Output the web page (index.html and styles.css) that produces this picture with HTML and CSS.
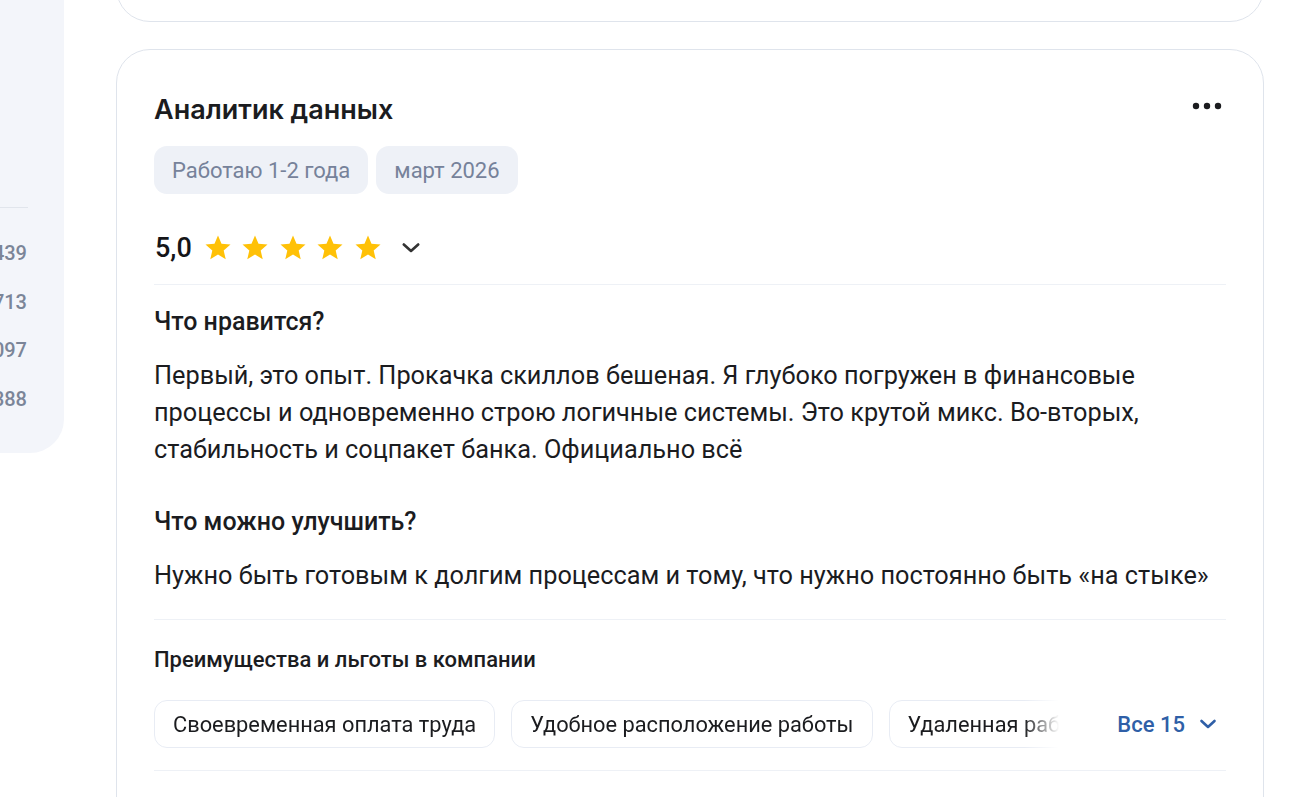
FILE: index.html
```html
<!DOCTYPE html>
<html lang="ru">
<head>
<meta charset="utf-8">
<title>Отзыв</title>
<link rel="stylesheet" href="styles.css">
</head>
<body>
<div class="page">
  <aside class="sidebar">
    <div class="side-divider"></div>
    <ul class="side-stats">
      <li>2 439</li>
      <li>1 713</li>
      <li>1 097</li>
      <li>2 388</li>
    </ul>
  </aside>
  <main class="feed">
    <div class="card card-prev"></div>
    <article class="card review">
      <header class="review-head">
        <h2 class="review-title">Аналитик данных</h2>
        <button class="more" aria-label="Ещё">
          <svg width="32" height="8" viewBox="0 0 32 8"><circle cx="4" cy="4" r="3.2"/><circle cx="15" cy="4" r="3.2"/><circle cx="26" cy="4" r="3.2"/></svg>
        </button>
      </header>
      <div class="tags">
        <span class="tag">Работаю 1-2 года</span>
        <span class="tag">март 2026</span>
      </div>
      <div class="rating">
        <span class="rating-value">5,0</span>
        <span class="stars">
          <svg class="star" viewBox="0 0 24 24"><path d="M12 17.27L18.18 21l-1.64-7.03L22 9.24l-7.19-.61L12 2 9.19 8.63 2 9.24l5.46 4.73L5.82 21z"/></svg>
          <svg class="star" viewBox="0 0 24 24"><path d="M12 17.27L18.18 21l-1.64-7.03L22 9.24l-7.19-.61L12 2 9.19 8.63 2 9.24l5.46 4.73L5.82 21z"/></svg>
          <svg class="star" viewBox="0 0 24 24"><path d="M12 17.27L18.18 21l-1.64-7.03L22 9.24l-7.19-.61L12 2 9.19 8.63 2 9.24l5.46 4.73L5.82 21z"/></svg>
          <svg class="star" viewBox="0 0 24 24"><path d="M12 17.27L18.18 21l-1.64-7.03L22 9.24l-7.19-.61L12 2 9.19 8.63 2 9.24l5.46 4.73L5.82 21z"/></svg>
          <svg class="star" viewBox="0 0 24 24"><path d="M12 17.27L18.18 21l-1.64-7.03L22 9.24l-7.19-.61L12 2 9.19 8.63 2 9.24l5.46 4.73L5.82 21z"/></svg>
        </span>
        <svg class="chev-dark" width="18" height="12" viewBox="0 0 18 12"><path d="M1.8 2.5 L9 9 L16.2 2.5" fill="none" stroke="#333" stroke-width="2.6" stroke-linecap="round" stroke-linejoin="round"/></svg>
      </div>
      <div class="divider"></div>
      <section class="block">
        <h3 class="block-title">Что нравится?</h3>
        <p class="block-text">Первый, это опыт. Прокачка скиллов бешеная. Я глубоко погружен в финансовые процессы и одновременно строю логичные системы. Это крутой микс. Во-вторых, стабильность и соцпакет банка. Официально всё</p>
      </section>
      <section class="block block-second">
        <h3 class="block-title">Что можно улучшить?</h3>
        <p class="block-text">Нужно быть готовым к долгим процессам и тому, что нужно постоянно быть «на стыке»</p>
      </section>
      <div class="divider divider-benefits"></div>
      <section class="benefits">
        <h4 class="benefits-title">Преимущества и льготы в компании</h4>
        <div class="benefits-row">
          <div class="chips">
            <span class="chip">Своевременная оплата труда</span>
            <span class="chip">Удобное расположение работы</span>
            <span class="chip">Удаленная работа</span>
          </div>
          <button class="all-link">Все 15
            <svg width="18" height="12" viewBox="0 0 18 12"><path d="M2.5 3 L9 9 L15.5 3" fill="none" stroke="#2f5fa7" stroke-width="2.6" stroke-linecap="round" stroke-linejoin="round"/></svg>
          </button>
        </div>
      </section>
      <div class="divider divider-last"></div>
    </article>
  </main>
</div>
</body>
</html>
```

FILE: styles.css
```css
* { box-sizing: border-box; }
html, body { margin: 0; padding: 0; }
body {
  background: #ffffff;
  font-family: Roboto, "Noto Sans", "Liberation Sans", sans-serif;
  color: #1b1c1f;
  overflow: hidden;
  height: 797px;
}
.page {
  display: flex;
  align-items: flex-start;
}
.sidebar {
  width: 64px;
  height: 453px;
  flex: none;
  background: #f3f5fa;
  border-bottom-right-radius: 34px;
  padding-top: 207px;
  overflow: hidden;
}
.side-divider {
  height: 1px;
  width: 28px;
  background: #e1e5ec;
}
.side-stats {
  list-style: none;
  margin: 0;
  padding: 0;
  width: 27px;
  display: flex;
  flex-direction: column;
  align-items: flex-end;
  margin-top: 31px;
  gap: 20.6px;
}
.side-stats li {
  font-size: 20px;
  line-height: 28px;
  font-weight: 500;
  color: #7b8598;
  white-space: nowrap;
}
.feed {
  margin-left: 52px;
  width: 1148px;
  display: flex;
  flex-direction: column;
  gap: 27px;
}
.card {
  border: 1px solid #dfe4ec;
  border-radius: 34px;
  background: #fff;
}
.card-prev {
  margin-top: -80px;
  height: 102px;
}
.review {
  padding: 44px 37px 60px;
}
.review-head {
  display: flex;
  align-items: center;
  justify-content: space-between;
  height: 32px;
}
.review-title {
  margin: 0;
  font-family: Inter, Roboto, sans-serif;
  font-size: 27px;
  line-height: 32px;
  font-weight: 600;
  color: #1b1c1f;
}
.more {
  border: 0;
  background: none;
  padding: 0;
  margin-right: 2px;
  margin-top: -8px;
  display: flex;
}
.more svg { fill: #1b1c1f; }
.tags {
  display: flex;
  gap: 8px;
  margin-top: 20px;
}
.tag {
  height: 48px;
  display: inline-flex;
  align-items: center;
  padding: 0 18px;
  border-radius: 13px;
  background: #eef1f7;
  color: #76829a;
  font-size: 22px;
}
.rating {
  display: flex;
  align-items: center;
  height: 40px;
  margin-top: 34px;
}
.rating-value {
  font-size: 27px;
  font-weight: 500;
  color: #141518;
  margin-left: 1px;
}
.stars {
  display: flex;
  gap: 7.5px;
  margin-left: 11px;
}
.star {
  width: 30px;
  height: 30px;
  fill: #ffc107;
}
.chev-dark {
  margin-left: 19px;
}
.divider {
  height: 1px;
  background: #eef1f6;
  margin-top: 16px;
}
.block { margin-top: 23px; }
.block-second { margin-top: 40px; }
.block-title {
  margin: 0;
  font-size: 25px;
  line-height: 28px;
  font-weight: 500;
  color: #1b1c1f;
}
.block-text {
  margin: 21px 0 0;
  font-size: 25.3px;
  line-height: 37px;
  color: #1b1c1f;
}
.divider-benefits { margin-top: 25px; }
.benefits { margin-top: 28px; }
.benefits-title {
  margin: 0;
  font-size: 22px;
  line-height: 24px;
  font-weight: 500;
  color: #1b1c1f;
}
.benefits-row {
  display: flex;
  align-items: center;
  margin-top: 28px;
}
.chips {
  display: flex;
  gap: 16px;
  width: 905px;
  overflow: hidden;
  -webkit-mask-image: linear-gradient(to right, #000 870px, transparent 905px);
  mask-image: linear-gradient(to right, #000 870px, transparent 905px);
  flex: none;
}
.chip {
  flex: none;
  height: 48px;
  display: inline-flex;
  align-items: center;
  padding: 0 18px;
  border: 1px solid #e8ecf4;
  border-radius: 13px;
  font-size: 21.8px;
  color: #1b1c1f;
  white-space: nowrap;
}
.all-link {
  margin-left: auto;
  border: 0;
  background: none;
  font-family: inherit;
  font-size: 22px;
  font-weight: 500;
  color: #2f5fa7;
  display: flex;
  align-items: center;
  gap: 14px;
  padding: 0 9px 0 0;
}
.divider-last { margin-top: 22px; }
```
